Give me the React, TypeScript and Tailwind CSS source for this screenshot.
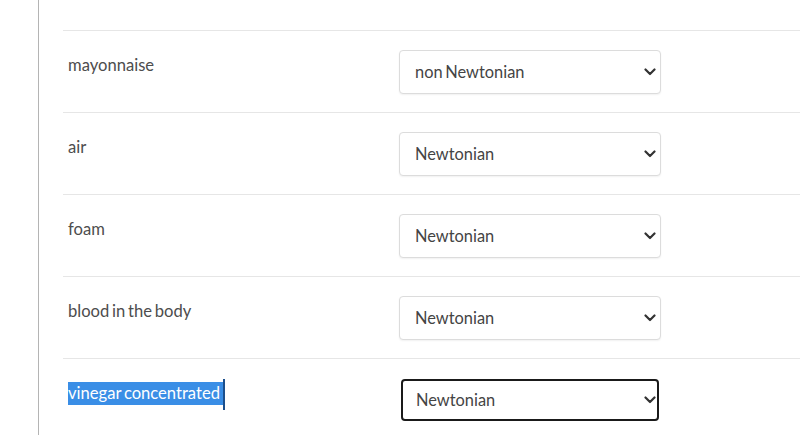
import React from "react";

const Chevron = () => (
  <svg width="12" height="8" viewBox="0 0 12 8" className="shrink-0">
    <path d="M1.5 1.5 L6 6 L10.5 1.5" fill="none" stroke="#333" strokeWidth="2.2" strokeLinecap="round" strokeLinejoin="round" />
  </svg>
);

const rows = [
  { label: "mayonnaise", value: "non Newtonian" },
  { label: "air", value: "Newtonian" },
  { label: "foam", value: "Newtonian" },
  { label: "blood in the body", value: "Newtonian" },
  { label: "vinegar concentrated", value: "Newtonian", focused: true },
];

export default function App() {
  return (
    <div
      className="w-[800px] h-[435px] overflow-hidden bg-white"
      style={{ fontFamily: "Lato, 'Open Sans', sans-serif" }}
    >
      <div className="ml-[38px] h-full border-l border-[#b4b4b4] pl-[24px] pt-[30px]">
        {rows.map((r, i) => (
          <div key={i} className="flex h-[82px] border-t border-[#e6e6e6]">
            <div className="w-[336px] pl-[5px] pt-[23px] text-[16.6px] leading-[23px] text-[#4d4d4d] [word-spacing:-1.5px]">
              {r.focused ? (
                <span className="relative inline-block bg-[#3a8ee6] pr-[3px] text-white">
                  {r.label}
                  <span className="absolute right-[-2px] top-[-3px] h-[31px] w-[2px] bg-[#1c4f8c]" />
                </span>
              ) : (
                r.label
              )}
            </div>
            {r.focused ? (
              <div className="ml-[2px] mt-[20px] flex h-[42px] w-[258px] items-center justify-between rounded-[4px] border-2 border-[#1a1a1a] bg-white pl-[13px] pr-[1px] text-[16.4px] text-[#444] [word-spacing:-1.5px]">
                <span>{r.value}</span>
                <Chevron />
              </div>
            ) : (
              <div className="mt-[19px] flex h-[44px] w-[262px] items-center justify-between rounded-[4px] border border-[#dcdcdc] bg-white pl-[15px] pr-[4px] text-[16.4px] text-[#444] shadow-[0_1px_2px_rgba(0,0,0,0.06)] [word-spacing:-1.5px]">
                <span>{r.value}</span>
                <Chevron />
              </div>
            )}
          </div>
        ))}
      </div>
    </div>
  );
}
